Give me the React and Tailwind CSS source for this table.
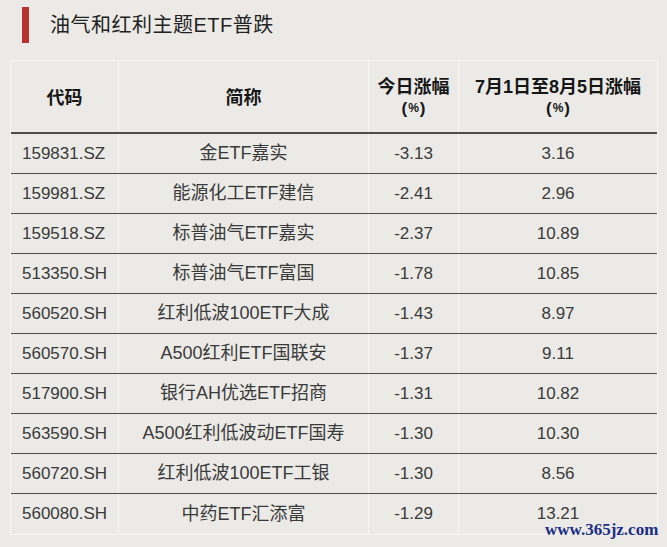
const rows = [
  ["159831.SZ", "金ETF嘉实", "-3.13", "3.16"],
  ["159981.SZ", "能源化工ETF建信", "-2.41", "2.96"],
  ["159518.SZ", "标普油气ETF嘉实", "-2.37", "10.89"],
  ["513350.SH", "标普油气ETF富国", "-1.78", "10.85"],
  ["560520.SH", "红利低波100ETF大成", "-1.43", "8.97"],
  ["560570.SH", "A500红利ETF国联安", "-1.37", "9.11"],
  ["517900.SH", "银行AH优选ETF招商", "-1.31", "10.82"],
  ["563590.SH", "A500红利低波动ETF国寿", "-1.30", "10.30"],
  ["560720.SH", "红利低波100ETF工银", "-1.30", "8.56"],
  ["560080.SH", "中药ETF汇添富", "-1.29", "13.21"],
];

const font = "font-['Liberation_Sans','Noto_Sans_CJK_SC',sans-serif]";

// (%) 的括号大、百分号小
const Pct = () => (
  <span className="text-[17px] leading-[21px]">
    (<span className="text-[12px] align-[2px] px-[1px]">%</span>)
  </span>
);

export default function App() {
  return (
    <div className={`relative w-[667px] h-[547px] overflow-hidden bg-[#ebeae6] ${font}`}>
      {/* 标题 */}
      <div className="flex items-center h-[50px] pl-[22px]">
        <div className="w-[7px] h-[36px] bg-[#b83230]" />
        <h1 className="ml-[21px] text-[20px] text-[#222] tracking-[0.5px]">
          油气和红利主题ETF普跌
        </h1>
      </div>

      {/* 表格 */}
      <div className="ml-[10px] mt-[10px] w-[648px] border border-[#f7f7f4]">
        <div className="flex h-[73px] border-b-2 border-[#4d4d4d] text-[18px] font-bold text-[#161616]">
          <div className="w-[108px] flex items-center justify-center pt-[3px] border-r border-[#f7f7f4]">
            代码
          </div>
          <div className="w-[250px] flex items-center justify-center pt-[3px] border-r border-[#f7f7f4]">
            简称
          </div>
          <div className="w-[90px] flex flex-col items-center justify-center pt-[2px] leading-[21px] border-r border-[#f7f7f4]">
            <span>今日涨幅</span>
            <Pct />
          </div>
          <div className="flex-1 flex flex-col items-center justify-center pt-[2px] leading-[21px]">
            <span>7月1日至8月5日涨幅</span>
            <Pct />
          </div>
        </div>

        {rows.map((r, i) => (
          <div
            key={r[0]}
            className={`flex h-[40px] text-[#3a3a3a] ${i < rows.length - 1 ? "border-b-[1.5px] border-[#4d4d4d]" : ""}`}
          >
            <div className="w-[108px] flex items-center pl-[11px] text-[17px] border-r border-[#f7f7f4]">
              {r[0]}
            </div>
            <div className="w-[250px] flex items-center justify-center text-[18px] border-r border-[#f7f7f4]">
              {r[1]}
            </div>
            <div className="w-[90px] flex items-center justify-center text-[17px] border-r border-[#f7f7f4]">
              {r[2]}
            </div>
            <div className="flex-1 flex items-center justify-center text-[17px]">
              {r[3]}
            </div>
          </div>
        ))}
      </div>

      {/* 水印 */}
      <div className="absolute left-[545px] top-[521px] font-['Liberation_Serif',serif] font-bold text-[17px] leading-none text-[#1c2f85]">
        www.365jz.com
      </div>
    </div>
  );
}
